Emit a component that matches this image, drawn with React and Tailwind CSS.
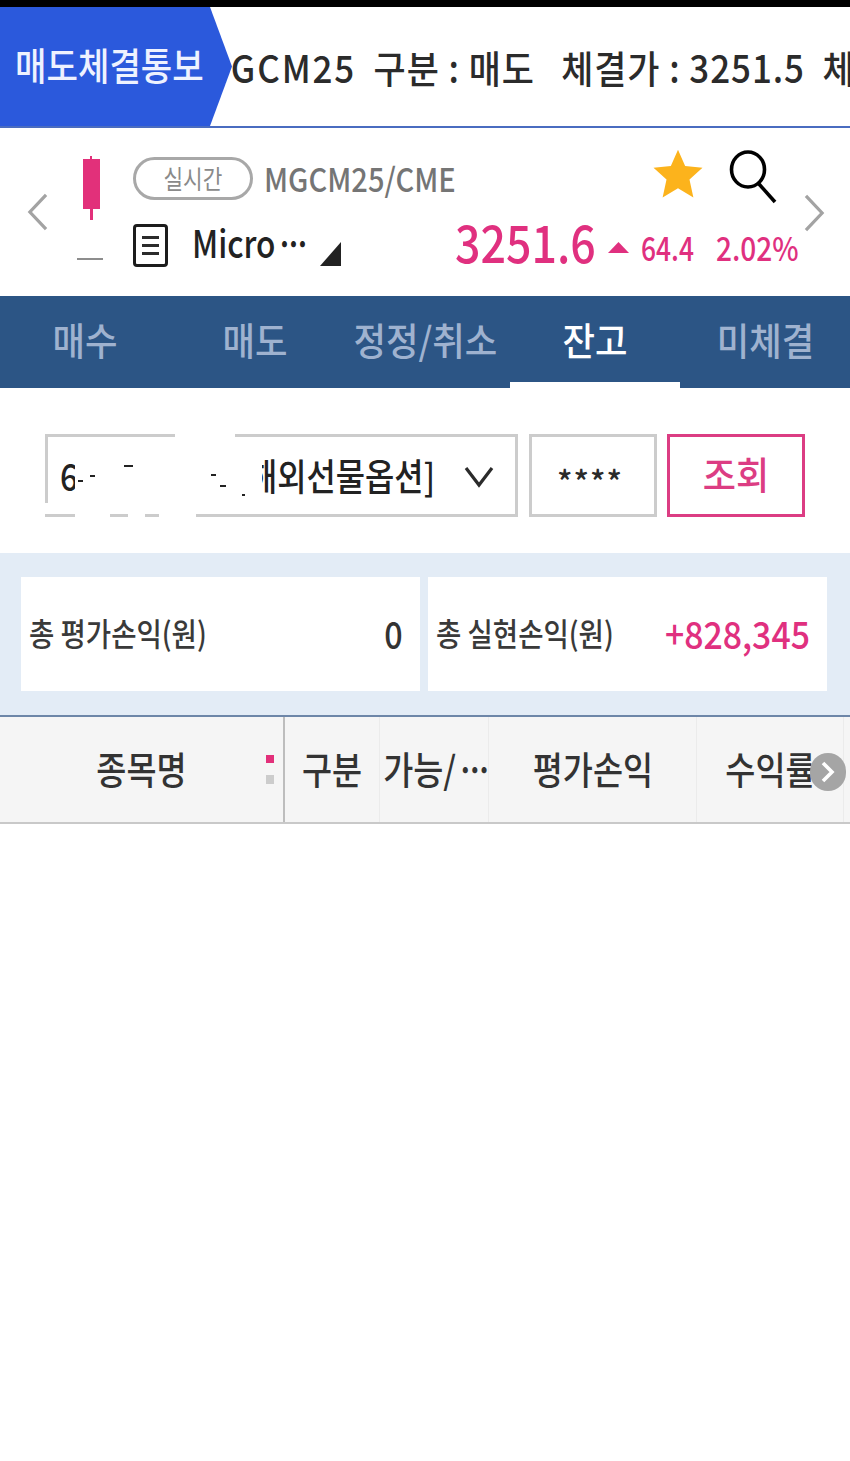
import React from 'react';

const fontClass = "font-['Noto_Sans_CJK_KR','Noto_Sans',sans-serif]";

// the app's font is narrower than anything installed, so squeeze the text sideways
function Narrow({ className = '', children }) {
  return <span className={`inline-block whitespace-nowrap ${className}`}>{children}</span>;
}

function Dots() {
  return <span className="tracking-[-11px]">···</span>;
}

function Chevron({ dir, className = '' }) {
  return (
    <svg className={className} viewBox="0 0 22 40" fill="none" stroke="#a3a3a3" strokeWidth="3.4">
      <polyline points={dir === 'left' ? '20,2 3,20 20,38' : '2,2 19,20 2,38'} />
    </svg>
  );
}

const tabs = [
  { name: '매수' },
  { name: '매도' },
  { name: '정정/취소' },
  { name: '잔고', active: true },
  { name: '미체결' },
];

const columns = [
  { name: '구분', width: 'w-[95px]' },
  { name: <>가능/<Dots /></>, width: 'w-[109px]', key: 'avail' },
  { name: '평가손익', width: 'w-[208px]' },
  { name: '수익률', width: 'w-[147px]' },
];

// leftovers of the painted-out account number
const specks = [
  'left-[30px] top-[43px] w-[5px] h-[2px]',
  'left-[42px] top-[38px] w-[5px] h-[2px]',
  'left-[76px] top-[28px] w-[9px] h-[2px]',
  'left-[163px] top-[37px] w-[5px] h-[2px]',
  'left-[172px] top-[48px] w-[6px] h-[2px]',
  'left-[194px] top-[57px] w-[3px] h-[2px]',
];

export default function App() {
  return (
    <div className={`${fontClass} w-[850px] min-h-[1461px] bg-white relative overflow-hidden`}>
      {/* Status bar edge */}
      <div className="h-[7px] bg-black" />

      {/* Ticker */}
      <div className="relative h-[121px] border-b-2 border-[#4a6cc0] overflow-hidden flex items-center">
        <Narrow className="ml-[200px] text-[38px] font-medium text-[#2b2b2b] origin-left scale-x-[.92] tracking-[1px]">
          <span className="tracking-[2px]">MGCM25</span>&nbsp; 구분 : 매도 &nbsp; 체결가 : 3251.5 &nbsp;체결량 : 1
        </Narrow>
        <div className="absolute left-0 top-0 bottom-0 w-[232px] bg-[#2b59dc] [clip-path:polygon(0_0,210px_0,232px_50%,210px_100%,0_100%)] flex items-center pl-[15px]">
          <Narrow className="text-[38px] font-medium text-[#eef2ff] origin-left scale-x-[.9] pb-[6px]">매도체결통보</Narrow>
        </div>
      </div>

      {/* Symbol header */}
      <div className="relative h-[168px] flex items-center">
        <div className="w-[75px] pl-[27px] shrink-0">
          <Chevron dir="left" className="w-[21px] h-[38px]" />
        </div>
        <div className="w-[58px] shrink-0 flex flex-col items-start pt-[11px] self-start mt-[17px]">
          <div className="ml-[3px] w-[26px] flex flex-col items-center">
            <div className="w-[2px] h-[3px] bg-[#e2307a]" />
            <div className="w-[17px] h-[50px] bg-[#e2307a]" />
            <div className="w-[3px] h-[11px] bg-[#e2307a]" />
          </div>
          <div className="mt-[38px] ml-[2px] w-[26px] h-[2px] bg-[#8d8d8d]" />
        </div>
        <div className="flex-1 self-start pt-[25px]">
          <div className="flex items-center h-[50px]">
            <div className="w-[120px] h-[43px] rounded-full border-[3px] border-[#a8a8a8] flex items-center justify-center">
              <Narrow className="text-[26px] text-[#8a8a8a] scale-x-[.82] leading-none">실시간</Narrow>
            </div>
            <Narrow className="ml-[11px] text-[33px] font-medium text-[#757575] origin-left scale-x-[.88] leading-none">MGCM25/CME</Narrow>
            <svg className="ml-auto w-[52px] h-[58px] mr-[25px] -mt-[8px]" viewBox="0 0 24 24" fill="#fcb31c">
              <path d="M12 .8l3.3 7.5 8 .8-6 5.4 1.8 8.3L12 18.6 4.9 22.8l1.8-8.3-6-5.4 8-.8z" />
            </svg>
            <svg className="w-[48px] h-[54px] mr-[73px] -mt-[2px]" viewBox="0 0 48 54" fill="none" stroke="#000" strokeWidth="3.6">
              <ellipse cx="19" cy="19.5" rx="16.5" ry="17.5" />
              <line x1="30" y1="34" x2="46" y2="52" />
            </svg>
          </div>
          <div className="flex items-center h-[64px] mt-[10px]">
            <div className="w-[35px] h-[43px] rounded-[4px] border-[3px] border-[#1c1c1c] flex flex-col items-center justify-center gap-[5px] shrink-0">
              <div className="w-[17px] h-[3px] bg-[#2b2b2b]" />
              <div className="w-[17px] h-[3px] bg-[#2b2b2b]" />
              <div className="w-[17px] h-[3px] bg-[#2b2b2b]" />
            </div>
            <Narrow className="ml-[24px] w-[111px] text-[38px] font-medium text-[#222] origin-left scale-x-[.83] leading-none -mt-[6px]">Micro<Dots /></Narrow>
            <div className="ml-[17px] mt-[18px] w-[21px] h-[24px] bg-[#222] [clip-path:polygon(100%_0,100%_100%,0_100%)]" />
            <Narrow className="ml-[114px] w-[140px] text-[52px] font-medium text-[#e0307f] origin-left scale-x-[.86] leading-none -mt-[8px]">3251.6</Narrow>
            <div className="ml-[13px] mt-[5px] w-[21px] h-[11px] bg-[#e0307f] [clip-path:polygon(50%_0,100%_100%,0_100%)]" />
            <Narrow className="ml-[12px] w-[54px] text-[33px] font-medium text-[#e0307f] origin-left scale-x-[.8] leading-none mt-[5px]">64.4</Narrow>
            <Narrow className="ml-[21px] text-[33px] font-medium text-[#e0307f] origin-left scale-x-[.85] leading-none mt-[5px]">2.02%</Narrow>
          </div>
        </div>
        <div className="absolute left-[804px] top-[66px]">
          <Chevron dir="right" className="w-[21px] h-[38px]" />
        </div>
      </div>

      {/* Tabs */}
      <div className="h-[92px] bg-[#2c5585] flex">
        {tabs.map((tab) => (
          <div
            key={tab.name}
            className={`w-[170px] flex items-center justify-center ${tab.active ? 'border-b-[6px] border-white pt-[6px]' : ''}`}
          >
            <Narrow className={`text-[38px] font-medium scale-x-[.93] pb-[8px] ${tab.active ? 'text-white' : 'text-[#9fb2cf]'}`}>
              {tab.name}
            </Narrow>
          </div>
        ))}
      </div>

      {/* Account form */}
      <div className="h-[165px] pl-[45px] pt-[46px] flex gap-[11px] items-start">
        <div className="relative w-[473px] h-[83px] border-[3px] border-[#cccccc] flex items-center">
          <Narrow className="ml-[12px] text-[37px] font-medium text-[#222] leading-none origin-left scale-x-[.86]">6</Narrow>
          <Narrow className="absolute left-[200px] text-[37px] font-medium text-[#222] origin-left scale-x-[.86] leading-none">해외선물옵션]</Narrow>
          <svg className="absolute right-[21px] top-[28px] w-[30px] h-[24px]" viewBox="0 0 30 24" fill="none" stroke="#2b2b2b" strokeWidth="3.2">
            <polyline points="2,3 15,20 28,3" />
          </svg>
          {/* account number is painted out in the picture */}
          <div className="absolute left-[27px] -top-[3px] w-[187px] h-[83px] bg-white" />
          <div className="absolute -left-[3px] top-[66px] w-[3px] h-[14px] bg-white" />
          <div className="absolute left-[-3px] top-[-3px] w-[130px] h-[3px] bg-[#cccccc]" />
          <div className="absolute left-[187px] top-[-3px] w-[30px] h-[3px] bg-[#cccccc]" />
          <div className="absolute left-[-3px] bottom-[-3px] w-[24px] h-[3px] bg-[#cccccc]" />
          <div className="absolute left-[62px] bottom-[-3px] w-[18px] h-[3px] bg-[#cccccc]" />
          <div className="absolute left-[97px] bottom-[-3px] w-[14px] h-[3px] bg-[#cccccc]" />
          <div className="absolute left-[148px] bottom-[-3px] w-[70px] h-[3px] bg-[#cccccc]" />
          {specks.map((cls) => (
            <div key={cls} className={`absolute bg-[#222] ${cls}`} />
          ))}
        </div>
        <div className="w-[128px] h-[83px] border-[3px] border-[#cccccc] flex items-center justify-center">
          <span className="text-[32px] font-medium text-[#2b2b2b] tracking-[1px] leading-none pt-[8px] pr-[6px]">****</span>
        </div>
        <div className="-ml-[1px] w-[138px] h-[83px] border-[3px] border-[#dc3d83] flex items-center justify-center">
          <Narrow className="text-[38px] font-medium text-[#dc3d83] scale-x-[.95] pb-[6px]">조회</Narrow>
        </div>
      </div>

      {/* Totals */}
      <div className="h-[164px] bg-[#e3ecf6] border-b-2 border-[#6d86a8] pl-[21px] pt-[24px] flex gap-[8px] items-start">
        <div className="w-[399px] h-[114px] bg-white flex items-center justify-between pl-[8px] pr-[17px]">
          <Narrow className="text-[32px] font-medium text-[#3a3a3a] origin-left scale-x-[.86] pb-[4px]">총 평가손익(원)</Narrow>
          <Narrow className="text-[38px] font-medium text-[#333] origin-right scale-x-[.85] pb-[4px]">0</Narrow>
        </div>
        <div className="w-[399px] h-[114px] bg-white flex items-center justify-between pl-[8px] pr-[17px]">
          <Narrow className="text-[32px] font-medium text-[#3a3a3a] origin-left scale-x-[.86] pb-[4px]">총 실현손익(원)</Narrow>
          <Narrow className="text-[38px] font-medium text-[#e0307f] origin-right scale-x-[.89] pb-[4px]">+828,345</Narrow>
        </div>
      </div>

      {/* Balance table header */}
      <div className="relative h-[107px] bg-[#f5f5f5] border-b-2 border-[#c9c9c9] flex">
        <div className="w-[285px] shrink-0 border-r-2 border-[#bdbdbd] relative flex items-center justify-center pr-[1px]">
          <Narrow className="text-[38px] font-medium text-[#333] scale-x-[.86] pb-[4px]">종목명</Narrow>
          <div className="absolute left-[266px] top-[38px] w-[8px] h-[8px] bg-[#e2307a]" />
          <div className="absolute left-[266px] top-[58px] w-[8px] h-[9px] bg-[#cccccc]" />
        </div>
        {columns.map((col) => (
          <div key={col.key || col.name} className={`${col.width} shrink-0 border-r border-[#ebebeb] flex items-center justify-center`}>
            <Narrow className="text-[38px] font-medium text-[#333] scale-x-[.86] pb-[4px]">{col.name}</Narrow>
          </div>
        ))}
        <div className="absolute left-[810px] top-[36px] w-[36px] h-[38px] rounded-full bg-[#a5a5a5] flex items-center justify-center">
          <svg className="w-[14px] h-[22px]" viewBox="0 0 14 22" fill="none" stroke="#fff" strokeWidth="3.6">
            <polyline points="2,2 11,11 2,20" />
          </svg>
        </div>
      </div>
    </div>
  );
}
